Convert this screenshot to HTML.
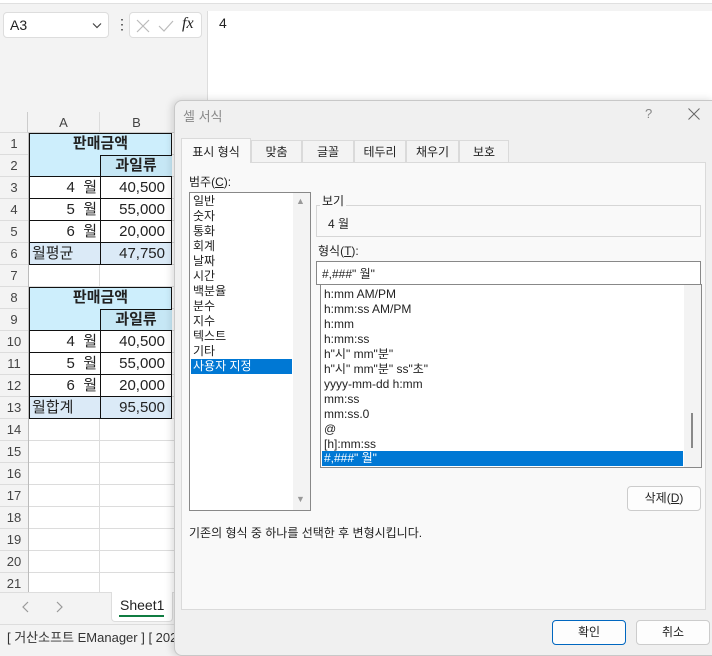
<!DOCTYPE html><html><head><meta charset="utf-8"><style>
*{margin:0;padding:0;box-sizing:border-box}
body{width:712px;height:654px;overflow:hidden;background:#f3f3f3;font-family:"Liberation Sans","Noto Sans CJK KR",sans-serif;font-size:13px;color:#222;position:relative}
.a{position:absolute}
.cell{position:absolute;border-right:1px solid #dcdcdc;border-bottom:1px solid #dcdcdc;background:#fff}
.rh{position:absolute;left:0;width:28px;height:22px;text-align:center;line-height:22px;color:#444;font-size:13px;border-bottom:1px solid #dcdcdc;background:#f3f3f3}
.t{position:absolute;font-size:15px;line-height:21px;white-space:nowrap}
.li{position:absolute;left:193px;font-size:12px;line-height:15px}
.fi{position:absolute;left:324px;font-size:12px;line-height:15px;white-space:nowrap}
.tab{position:absolute;top:140px;height:22px;border:1px solid #dadada;border-bottom:none;background:#f3f3f3;text-align:center;line-height:22px;font-size:12px}
.btn{position:absolute;border:1px solid #ccc;border-radius:4px;background:#fdfdfd;text-align:center;font-size:12px}
</style></head><body>
<div class="a" style="left:0;top:0;width:712px;height:4px;background:#fff;border-bottom:1px solid #e0e0e0"></div>
<div class="a" style="left:3px;top:12px;width:106px;height:26px;background:#fff;border:1px solid #ddd;border-radius:4px;font-size:14px;line-height:24px;padding-left:6px">A3<svg class="a" style="right:6px;top:9px" width="10" height="7" viewBox="0 0 10 7"><path d="M1 1.5L5 5.5L9 1.5" fill="none" stroke="#444" stroke-width="1.2"/></svg></div>
<div class="a" style="left:115px;top:16px;width:4px;font-size:14px;color:#333;line-height:16px">&#8942;</div>
<div class="a" style="left:129px;top:12px;width:73px;height:26px;background:#fff;border:1px solid #ddd;border-radius:4px">
<svg class="a" style="left:6px;top:6px" width="14" height="14" viewBox="0 0 14 14"><path d="M1 1L13 13M13 1L1 13" stroke="#bbb" stroke-width="1.2"/></svg>
<svg class="a" style="left:28px;top:6px" width="16" height="14" viewBox="0 0 16 14"><path d="M1 7L6 12L15 2" fill="none" stroke="#bbb" stroke-width="1.2"/></svg>
<span class="a" style="left:52px;top:2px;font-family:'Liberation Serif',serif;font-style:italic;font-size:16px">fx</span></div>
<div class="a" style="left:207px;top:11px;width:505px;height:90px;background:#fff;border-left:1px solid #ddd"><span class="a" style="left:11px;top:4px;font-size:14px">4</span></div>
<div class="a" style="left:0;top:112px;width:175px;height:480px;background:#fff"></div>
<div class="a" style="left:0;top:112px;width:28px;height:21px;background:#f3f3f3;border-bottom:1px solid #dcdcdc;border-right:1px solid #ccc"></div>
<div class="a" style="left:28px;top:112px;width:72px;height:21px;background:#f3f3f3;border-right:1px solid #dcdcdc;border-bottom:1px solid #ccc;text-align:center;line-height:21px;color:#444">A</div>
<div class="a" style="left:100px;top:112px;width:75px;height:21px;background:#f3f3f3;border-bottom:1px solid #ccc;text-align:center;line-height:21px;color:#444;padding-right:2px">B</div>
<div class="a" style="left:28px;top:133px;width:1px;height:460px;background:#bbb"></div>
<div id="rows"></div>
<script>
var h='';
for(var i=1;i<=21;i++){var y=133+(i-1)*22;h+='<div class="rh" style="top:'+y+'px">'+i+'</div>';h+='<div class="cell" style="left:29px;top:'+y+'px;width:71px;height:22px"></div><div class="cell" style="left:100px;top:'+y+'px;width:75px;height:22px"></div>';}
document.getElementById('rows').innerHTML=h;
</script>
<div class="a" style="left:29px;top:133px;width:143px;height:44px;background:#cdeefc;border:1px solid #111"></div>
<div class="a" style="left:100px;top:155px;width:72px;height:22px;border-left:1px solid #111;border-top:1px solid #111;background:#c6e7f5"></div>
<div class="t" style="left:29px;top:133px;width:143px;text-align:center;font-weight:bold">판매금액</div>
<div class="t" style="left:100px;top:155px;width:72px;text-align:center;font-weight:bold">과일류</div>
<div class="a" style="left:29px;top:176px;width:143px;height:89px;border:1px solid #111;background:#fff"></div>
<div class="a" style="left:100px;top:176px;width:1px;height:89px;background:#111"></div>
<div class="a" style="left:29px;top:198px;width:143px;height:1px;background:#111"></div>
<div class="a" style="left:29px;top:220px;width:143px;height:1px;background:#111"></div>
<div class="a" style="left:29px;top:242px;width:143px;height:23px;background:#dbeaf7;border:1px solid #111"></div>
<div class="a" style="left:100px;top:242px;width:1px;height:23px;background:#111"></div>
<div class="t" style="left:30px;top:177px;width:67px;text-align:right">4&nbsp; 월</div><div class="t" style="left:101px;top:177px;width:64px;text-align:right">40,500</div>
<div class="t" style="left:30px;top:199px;width:67px;text-align:right">5&nbsp; 월</div><div class="t" style="left:101px;top:199px;width:64px;text-align:right">55,000</div>
<div class="t" style="left:30px;top:221px;width:67px;text-align:right">6&nbsp; 월</div><div class="t" style="left:101px;top:221px;width:64px;text-align:right">20,000</div>
<div class="t" style="left:32px;top:243px">월평균</div><div class="t" style="left:101px;top:243px;width:64px;text-align:right">47,750</div>
<div class="a" style="left:29px;top:287px;width:143px;height:44px;background:#cdeefc;border:1px solid #111"></div>
<div class="a" style="left:100px;top:309px;width:72px;height:22px;border-left:1px solid #111;border-top:1px solid #111;background:#c6e7f5"></div>
<div class="t" style="left:29px;top:287px;width:143px;text-align:center;font-weight:bold">판매금액</div>
<div class="t" style="left:100px;top:309px;width:72px;text-align:center;font-weight:bold">과일류</div>
<div class="a" style="left:29px;top:330px;width:143px;height:89px;border:1px solid #111;background:#fff"></div>
<div class="a" style="left:100px;top:330px;width:1px;height:89px;background:#111"></div>
<div class="a" style="left:29px;top:352px;width:143px;height:1px;background:#111"></div>
<div class="a" style="left:29px;top:374px;width:143px;height:1px;background:#111"></div>
<div class="a" style="left:29px;top:396px;width:143px;height:23px;background:#dbeaf7;border:1px solid #111"></div>
<div class="a" style="left:100px;top:396px;width:1px;height:23px;background:#111"></div>
<div class="t" style="left:30px;top:331px;width:67px;text-align:right">4&nbsp; 월</div><div class="t" style="left:101px;top:331px;width:64px;text-align:right">40,500</div>
<div class="t" style="left:30px;top:353px;width:67px;text-align:right">5&nbsp; 월</div><div class="t" style="left:101px;top:353px;width:64px;text-align:right">55,000</div>
<div class="t" style="left:30px;top:375px;width:67px;text-align:right">6&nbsp; 월</div><div class="t" style="left:101px;top:375px;width:64px;text-align:right">20,000</div>
<div class="t" style="left:32px;top:397px">월합계</div><div class="t" style="left:101px;top:397px;width:64px;text-align:right">95,500</div>
<div class="a" style="left:0;top:592px;width:175px;height:32px;background:#f3f3f3;border-top:1px solid #ddd"></div>
<svg class="a" style="left:22px;top:601px" width="8" height="12" viewBox="0 0 8 12"><path d="M6 1L1 6L6 11" fill="none" stroke="#999" stroke-width="1.2"/></svg>
<svg class="a" style="left:55px;top:601px" width="8" height="12" viewBox="0 0 8 12"><path d="M2 1L7 6L2 11" fill="none" stroke="#999" stroke-width="1.2"/></svg>
<div class="a" style="left:111px;top:592px;width:62px;height:30px;background:#fff;border-radius:0 0 4px 4px;border:1px solid #ddd;border-top:none"></div>
<div class="a" style="left:120px;top:597px;font-size:14px">Sheet1</div>
<div class="a" style="left:119px;top:615px;width:45px;height:2px;background:#107c41"></div>
<div class="a" style="left:0;top:624px;width:175px;height:30px;background:#f3f3f3;border-top:1px solid #ddd"></div>
<div class="a" style="left:7px;top:627px;font-size:13px;color:#333;white-space:nowrap">[ 거산소프트 EManager ] [ 2024</div>
<div class="a" style="left:174px;top:100px;width:540px;height:556px;background:#f0f0f0;border:1px solid #c8c8c8;border-radius:8px 0 0 8px;box-shadow:-2px 0 8px rgba(0,0,0,.15)"></div>
<div class="a" style="left:183px;top:106px;font-size:13px;color:#888">셀 서식</div>
<div class="a" style="left:645px;top:106px;font-size:13px;color:#888">?</div>
<svg class="a" style="left:688px;top:108px" width="12" height="12" viewBox="0 0 12 12"><path d="M0.5 0.5L11.5 11.5M11.5 0.5L0.5 11.5" stroke="#666" stroke-width="1"/></svg>
<div class="a" style="left:181px;top:162px;width:525px;height:448px;background:#f9f9f9;border:1px solid #dadada"></div>
<div class="tab" style="left:181px;top:138px;height:25px;width:70px;background:#f9f9f9;line-height:26px;z-index:2">표시 형식</div>
<div class="tab" style="left:251px;width:51px">맞춤</div>
<div class="tab" style="left:302px;width:52px">글꼴</div>
<div class="tab" style="left:354px;width:52px">테두리</div>
<div class="tab" style="left:406px;width:53px">채우기</div>
<div class="tab" style="left:459px;width:50px">보호</div>
<div class="a" style="left:189px;top:173px;font-size:12px">범주(<u>C</u>):</div>
<div class="a" style="left:189px;top:192px;width:122px;height:319px;background:#fff;border:1px solid #888"></div>
<div class="a" style="left:293px;top:193px;width:17px;height:317px;background:#f3f3f3"></div>
<div class="a" style="left:296px;top:196px;font-size:9px;color:#999">&#9650;</div>
<div class="a" style="left:296px;top:494px;font-size:9px;color:#999">&#9660;</div>
<div class="li" style="top:194px">일반</div><div class="li" style="top:209px">숫자</div><div class="li" style="top:224px">통화</div><div class="li" style="top:239px">회계</div><div class="li" style="top:254px">날짜</div><div class="li" style="top:269px">시간</div><div class="li" style="top:284px">백분율</div><div class="li" style="top:299px">분수</div><div class="li" style="top:314px">지수</div><div class="li" style="top:329px">텍스트</div><div class="li" style="top:344px">기타</div>
<div class="a" style="left:191px;top:359px;width:101px;height:15px;background:#0078d4"></div>
<div class="li" style="top:359px;color:#fff">사용자 지정</div>
<div class="a" style="left:316px;top:205px;width:385px;height:32px;border:1px solid #d6d6d6"></div>
<div class="a" style="left:320px;top:192px;font-size:12px;background:#f9f9f9;padding:0 2px">보기</div>
<div class="a" style="left:328px;top:215px;font-size:12px">4 월</div>
<div class="a" style="left:318px;top:242px;font-size:12px">형식(<u>T</u>):</div>
<div class="a" style="left:316px;top:261px;width:385px;height:24px;background:#fff;border:1px solid #888"></div>
<div class="a" style="left:322px;top:265px;font-size:12px">#,###" 월"</div>
<div class="a" style="left:320px;top:284px;width:382px;height:184px;background:#fff;border:1px solid #888"></div>
<div class="a" style="left:684px;top:285px;width:17px;height:182px;background:#f3f3f3"></div>
<div class="a" style="left:691px;top:413px;width:2px;height:35px;background:#888"></div>
<div class="fi" style="top:287px">h:mm AM/PM</div><div class="fi" style="top:302px">h:mm:ss AM/PM</div><div class="fi" style="top:317px">h:mm</div><div class="fi" style="top:332px">h:mm:ss</div><div class="fi" style="top:347px">h"시" mm"분"</div><div class="fi" style="top:362px">h"시" mm"분" ss"초"</div><div class="fi" style="top:377px">yyyy-mm-dd h:mm</div><div class="fi" style="top:392px">mm:ss</div><div class="fi" style="top:407px">mm:ss.0</div><div class="fi" style="top:422px">@</div><div class="fi" style="top:437px">[h]:mm:ss</div>
<div class="a" style="left:322px;top:451px;width:361px;height:15px;background:#0078d4"></div>
<div class="fi" style="top:451px;color:#fff">#,###" 월"</div>
<div class="btn" style="left:627px;top:486px;width:74px;height:25px;line-height:23px">삭제(<u>D</u>)</div>
<div class="a" style="left:189px;top:524px;font-size:12px;white-space:nowrap">기존의 형식 중 하나를 선택한 후 변형시킵니다.</div>
<div class="btn" style="left:552px;top:620px;width:74px;height:25px;line-height:23px;border:1px solid #0067c0">확인</div>
<div class="btn" style="left:636px;top:620px;width:74px;height:25px;line-height:23px">취소</div>
</body></html>
